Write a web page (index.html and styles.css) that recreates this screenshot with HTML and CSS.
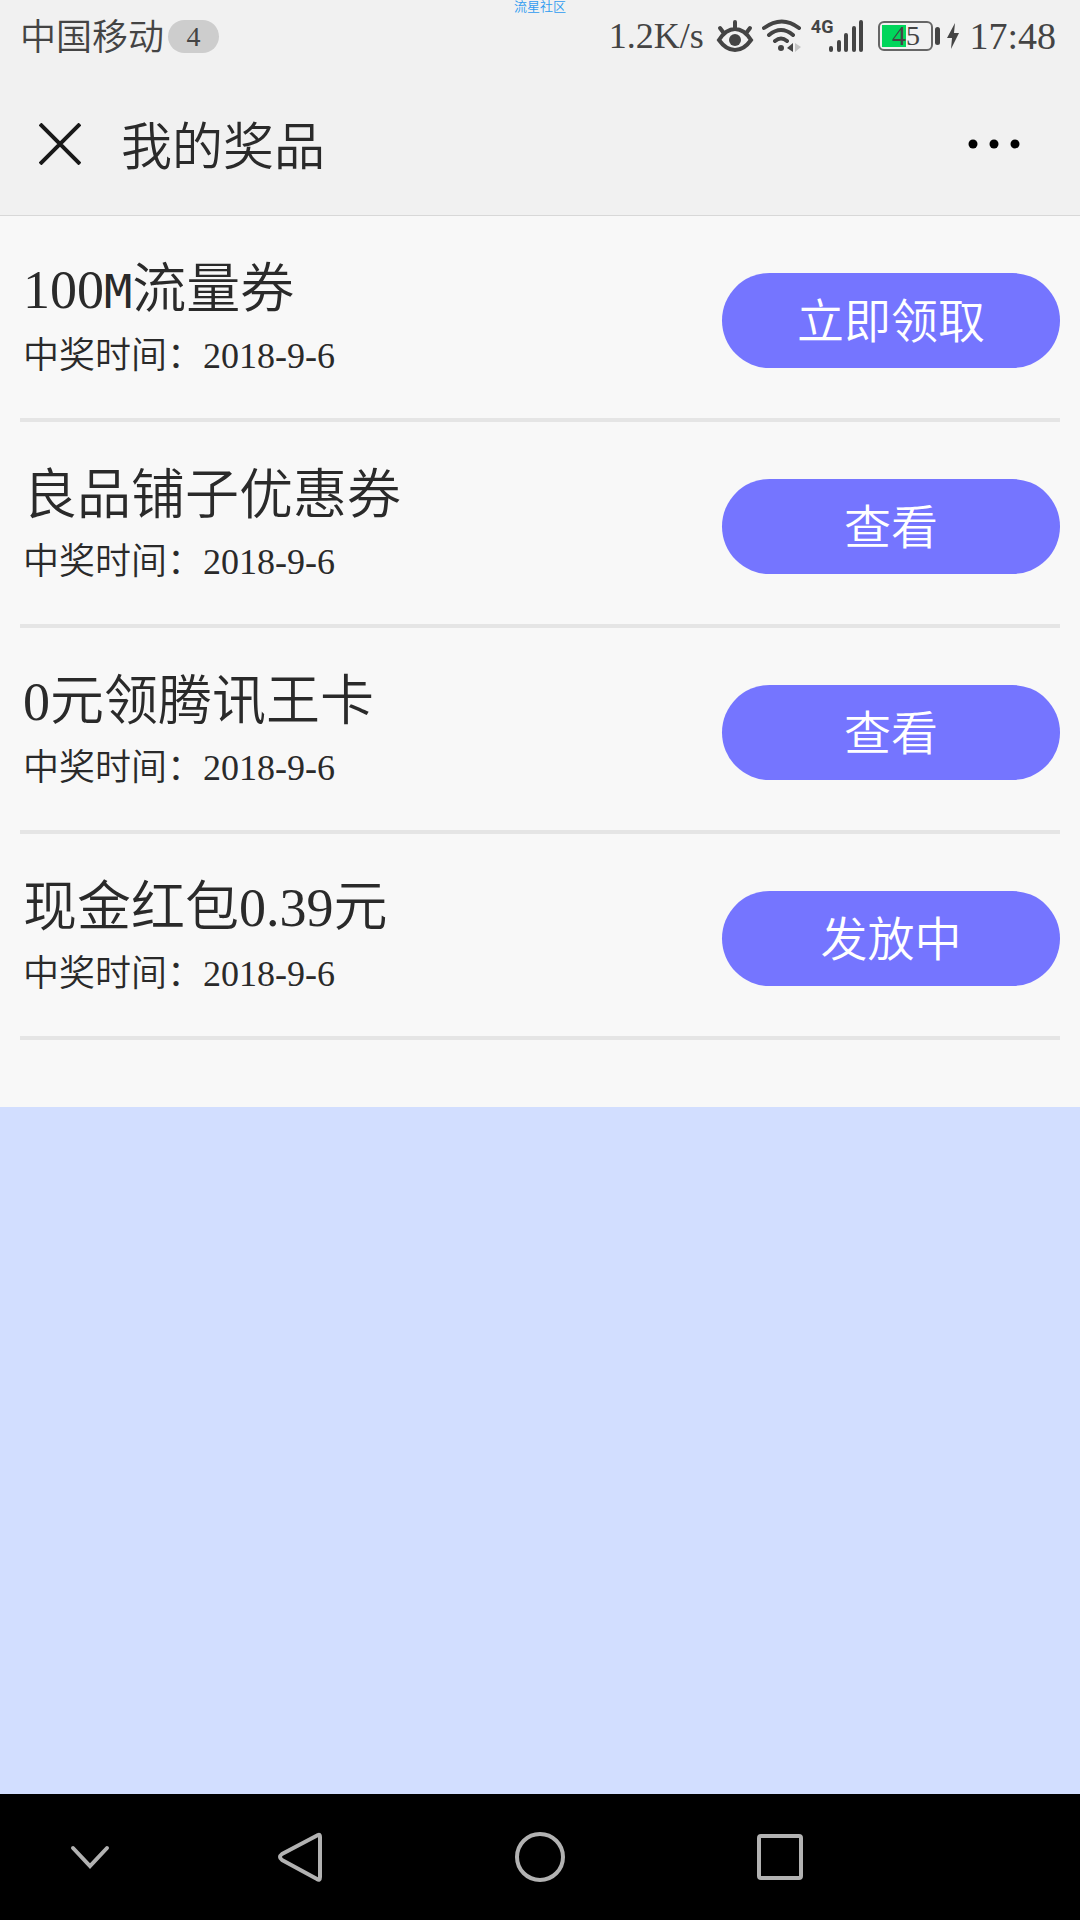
FILE: index.html
```html
<!DOCTYPE html>
<html lang="zh-CN">
<head>
<meta charset="utf-8">
<meta name="viewport" content="width=device-width, initial-scale=1">
<title>我的奖品</title>
<link rel="stylesheet" href="styles.css">
</head>
<body>
<div class="watermark">流星社区</div>
<div class="status">
  <span class="carrier">中国移动</span>
  <span class="badge">4</span>
  <span class="speed">1.2K/s</span>
  <svg class="eye" width="38" height="34" viewBox="0 0 38 34" fill="none" stroke="#444" stroke-width="4" stroke-linecap="round" aria-hidden="true">
    <path d="M3 21Q10 10 19 10T35 21Q28 31 19 31T3 21ZM19 9V3M7 13L4 9M31 13L34 9"/>
    <circle cx="19" cy="21" r="6" fill="#444" stroke="none"/>
  </svg>
  <svg class="wifi" width="40" height="34" viewBox="0 0 40 34" fill="none" stroke="#444" stroke-width="4" stroke-linecap="round" aria-hidden="true">
    <path d="M2 9Q20-4 37 9M7 16Q19 6 31 16M13 22Q19 17 25 22"/>
    <circle cx="19" cy="29" r="3" fill="#444" stroke="none"/>
    <path d="M31 24V33L25 29Z" fill="#444" stroke="none"/>
    <path d="M33 24V33L39 28Z" fill="#c4c4c4" stroke="none"/>
  </svg>
  <span class="network">4G</span>
  <svg class="signal" width="35" height="34" viewBox="0 0 35 34" stroke="#444" stroke-width="4" stroke-linecap="round" aria-hidden="true">
    <path d="M2 29V31M10 23V31M17 16V31M25 9V31M32 3V31"/>
  </svg>
  <span class="battery">45</span>
  <span class="battery-cap"></span>
  <svg class="bolt" width="12" height="26" viewBox="0 0 12 26" fill="#444" aria-hidden="true"><path d="M8 0L0 15H5L4 26L12 10H7Z"/></svg>
  <time class="clock">17:48</time>
</div>
<header class="header">
  <button class="icon-button" aria-label="关闭"><svg width="42" height="42" viewBox="0 0 42 42" stroke="#191919" stroke-width="4"><path d="M1 1L41 41M41 1L1 41"/></svg></button>
  <h1 class="heading">我的奖品</h1>
  <button class="icon-button" aria-label="更多"><svg width="52" height="10" viewBox="0 0 52 10"><circle cx="5" cy="5" r="4.5"/><circle cx="26" cy="5" r="4.5"/><circle cx="47" cy="5" r="4.5"/></svg></button>
</header>
<main class="main">
  <ul class="prizes">
    <li class="prize">
      <div><h2 class="name">100<span class="fixed">M</span>流量券</h2><p class="date">中奖时间：2018-9-6</p></div>
      <button class="action">立即领取</button>
    </li>
    <li class="prize">
      <div><h2 class="name">良品铺子优惠券</h2><p class="date">中奖时间：2018-9-6</p></div>
      <button class="action">查看</button>
    </li>
    <li class="prize">
      <div><h2 class="name">0元领腾讯王卡</h2><p class="date">中奖时间：2018-9-6</p></div>
      <button class="action">查看</button>
    </li>
    <li class="prize">
      <div><h2 class="name">现金红包0.39元</h2><p class="date">中奖时间：2018-9-6</p></div>
      <button class="action">发放中</button>
    </li>
  </ul>
</main>
<nav class="nav">
  <button class="nav-button" aria-label="收起"><svg width="40" height="24" viewBox="0 0 40 24" stroke-linecap="round"><path d="M3 3L20 21L37 3"/></svg></button>
  <button class="nav-button" aria-label="返回"><svg width="44" height="50" viewBox="0 0 44 50" stroke-linejoin="round"><path d="M40 3Q42 2 42 5V45Q42 49 39 47L4 28Q0 25 4 22Z"/></svg></button>
  <button class="nav-button" aria-label="主页"><svg width="50" height="50" viewBox="0 0 50 50"><circle cx="25" cy="25" r="23"/></svg></button>
  <button class="nav-button" aria-label="最近任务"><svg width="46" height="46" viewBox="0 0 46 46"><rect x="2" y="2" width="42" height="42" rx="2"/></svg></button>
</nav>
</body>
</html>
```
FILE: styles.css
```css
* {
  box-sizing: border-box;
}

body {
  margin: 0;
  min-height: 100vh;
  display: flex;
  flex-direction: column;
  background: #d2deff;
  color: #2a2a2a;
  font-family: "Liberation Serif", "Noto Sans CJK SC", serif;
  font-weight: 350;
}

button {
  padding: 0;
  border: 0;
  background: none;
  font: inherit;
}

svg {
  display: block;
  flex: none;
}

.watermark {
  position: absolute;
  top: 0;
  left: 0;
  right: 0;
  text-align: center;
  font-size: 13px;
  line-height: 13px;
  color: #2f9bf0;
}

.status {
  height: 72px;
  padding: 0 24px 0 20px;
  display: flex;
  align-items: center;
  background: #f1f1f1;
  color: #444;
  font-size: 36px;
  line-height: 36px;
}

.carrier {
  padding-top: 4px;
}

.badge {
  width: 51px;
  height: 33px;
  margin-left: 4px;
  border-radius: 17px;
  background: #cdcdcd;
  font-size: 28px;
  line-height: 33px;
  text-align: center;
}

.speed {
  margin-left: auto;
}

.eye {
  margin-left: 12px;
}

.wifi {
  margin-left: 8px;
}

.network {
  margin-left: 9px;
  align-self: flex-start;
  padding-top: 17px;
  font: bold 18px/20px "Liberation Sans Narrow", "Roboto", sans-serif;
}

.signal {
  margin: 0 14px 0 -4px;
}

.battery {
  width: 55px;
  height: 30px;
  border: 2px solid #666;
  border-radius: 6px;
  background: linear-gradient(#00d65b, #00d65b) 2px 2px / 24px 22px no-repeat;
  font-size: 28px;
  line-height: 26px;
  text-align: center;
}

.battery-cap {
  width: 5px;
  height: 18px;
  margin: 0 7px 0 2px;
  border-radius: 3px;
  background: #444;
}

.clock {
  margin-left: 10px;
  font-size: 38px;
}

.header {
  height: 144px;
  padding: 0 60px 0 39px;
  display: flex;
  align-items: center;
  border-bottom: 1px solid #d8d8d8;
  background: #f1f1f1;
}

.heading {
  flex: 1;
  margin: 0 0 0 40px;
  padding-top: 8px;
  font-size: 51px;
  line-height: 72px;
  font-weight: 350;
}

.main {
  flex: 1;
}

.prizes {
  margin: 0;
  padding: 0 20px 67px;
  list-style: none;
  background: #f8f8f8;
}

.prize {
  min-height: 206px;
  padding: 6px 0 0 3px;
  display: flex;
  align-items: center;
  justify-content: space-between;
  border-bottom: 4px solid #e5e5e5;
}

.name,
.date {
  margin: 0;
  font-weight: 350;
}

.name {
  font-size: 54px;
  line-height: 72px;
}

.fixed {
  font-family: "DejaVu Sans Mono", monospace;
  font-size: 47px;
  line-height: 1;
}

.date {
  font-size: 36px;
  line-height: 60px;
}

.action {
  width: 338px;
  height: 95px;
  padding-bottom: 6px;
  border-radius: 48px;
  background: #7575ff;
  color: #fff;
  font-size: 47px;
}

.nav {
  height: 126px;
  display: grid;
  grid-template-columns: 3fr 4fr 4fr 4fr 3fr;
  background: #000;
}

.nav svg {
  fill: none;
  stroke: #b2b2b2;
  stroke-width: 4;
}

.nav-button {
  display: grid;
  place-items: center;
}
```
